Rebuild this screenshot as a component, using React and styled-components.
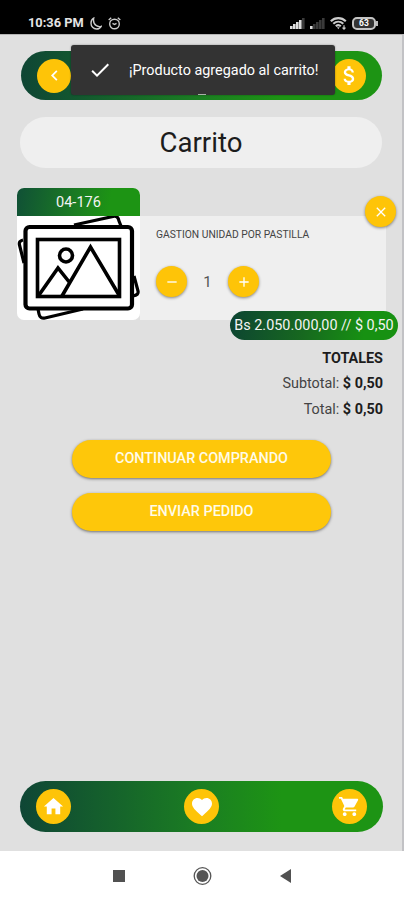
import React from 'react';
import styled, { createGlobalStyle } from 'styled-components';
import {
  MdAdd,
  MdCheck,
  MdChevronLeft,
  MdClose,
  MdFavorite,
  MdHome,
  MdRemove,
  MdShoppingCart,
  MdAttachMoney,
} from 'react-icons/md';

const GlobalStyle = createGlobalStyle`
  * {
    box-sizing: border-box;
  }
  body {
    margin: 0;
    font-family: Roboto, 'Liberation Sans', sans-serif;
    color: #1c1c1c;
    background: #e0e0e0;
  }
`;

const Screen = styled.div`
  display: flex;
  flex-direction: column;
  width: 404px;
  height: 900px;
  overflow: hidden;
  background: #e0e0e0;
`;

const StatusBar = styled.div`
  display: flex;
  align-items: center;
  flex: 0 0 34px;
  padding: 12px 26px 0 28px;
  background: #000;
  color: #e4e4e4;
`;

const Clock = styled.span`
  width: 62px;
  font-size: 12.8px;
  font-weight: 700;
  line-height: 22px;
  white-space: nowrap;
`;

const StatusIcons = styled.div`
  display: flex;
  align-items: center;
  gap: ${({ $gap }) => $gap}px;
  margin-left: ${({ $push }) => ($push ? 'auto' : '0')};
`;

const Content = styled.main`
  position: relative;
  display: flex;
  flex-direction: column;
  flex: 1;
  border-top: 1px solid #b4b4b4;
  border-right: 2px solid #c2c2c5;
  padding-top: 16px;
`;

const Bar = styled.div`
  display: flex;
  align-items: center;
  justify-content: space-between;
  width: ${({ $width }) => $width}px;
  height: ${({ $height }) => $height}px;
  margin-left: ${({ $left }) => $left}px;
  padding: 0 16px;
  border-radius: 26px;
  background: linear-gradient(90deg, #0f4635 0%, #1b7e22 50%, #1d9414 72%, #1d9414 100%);
`;

const Brand = styled.span`
  position: relative;
  z-index: 1;
  align-self: flex-end;
  width: 8px;
  height: 1px;
  margin-bottom: 5px;
  background: #a9b0a9;
`;

const RoundButton = styled.button`
  display: flex;
  align-items: center;
  justify-content: center;
  flex: none;
  width: ${({ $size }) => $size}px;
  height: ${({ $size }) => $size}px;
  padding: 0;
  border: 0;
  border-radius: 50%;
  background: #fec408;
  color: #fff;
  box-shadow: ${({ $raised }) => ($raised ? '0 1px 3px rgba(0, 0, 0, 0.45)' : 'none')};
`;

const Toast = styled.div`
  position: absolute;
  top: 10px;
  left: 71px;
  display: flex;
  align-items: center;
  width: 264px;
  height: 50px;
  padding-left: 17px;
  border-radius: 3px;
  background: #333;
  color: #fff;
  box-shadow: 0 0 2px rgba(0, 0, 0, 0.4);
`;

const ToastText = styled.span`
  margin: 0 0 0 17px;
  font-size: 14.4px;
  white-space: nowrap;
`;

const Title = styled.h1`
  width: 362px;
  height: 51px;
  margin: 17px 0 0 20px;
  border-radius: 26px;
  background: #efefef;
  font-size: 27.6px;
  font-weight: 400;
  line-height: 51px;
  text-align: center;
`;

const Item = styled.section`
  position: relative;
  display: flex;
  align-items: flex-end;
  height: 132px;
  margin: 20px 0 0 17px;
`;

const Thumb = styled.div`
  width: 123px;
  height: 132px;
  border-radius: 7px;
  background: #fff;
  overflow: hidden;
`;

const Code = styled.div`
  height: 28px;
  background: linear-gradient(100deg, #105036 0%, #1b7c22 48%, #1d9414 75%);
  color: #f4f4f4;
  font-size: 14.6px;
  line-height: 28px;
  text-align: center;
`;

const Details = styled.div`
  width: 246px;
  height: 104px;
  padding: 12px 0 0 16px;
  background: #efefef;
`;

const ProductName = styled.p`
  margin: 0;
  color: #444;
  font-size: 10.3px;
  line-height: 14px;
  white-space: nowrap;
`;

const Stepper = styled.div`
  display: flex;
  align-items: center;
  margin-top: 24px;
`;

const Quantity = styled.span`
  width: 41px;
  color: #555;
  font-size: 15px;
  text-align: center;
`;

const RemoveSlot = styled.div`
  position: absolute;
  top: 8px;
  left: 348px;
`;

const Price = styled.div`
  position: absolute;
  top: 123px;
  left: 213px;
  width: 168px;
  height: 29px;
  border-radius: 15px;
  background: linear-gradient(100deg, #0d4432 0%, #17691f 45%, #179112 80%);
  color: #f4f4f4;
  font-size: 14.4px;
  line-height: 30px;
  text-align: center;
  white-space: nowrap;
`;

const Totals = styled.div`
  display: flex;
  flex-direction: column;
  align-items: flex-end;
  margin: 26px 19px 0 0;
`;

const TotalLine = styled.div`
  color: #444;
  font-size: 14.4px;
  line-height: 25.3px;

  b {
    color: #1c1c1c;
    font-weight: 700;
  }
`;

const Actions = styled.div`
  display: flex;
  flex-direction: column;
  gap: 15px;
  width: 259px;
  margin: 18px 0 0 72px;
`;

const Action = styled.button`
  height: 38px;
  padding: 0 0 1px;
  border: 0;
  border-radius: 19px;
  background: #fec70a;
  color: #fffbe8;
  font-family: inherit;
  font-size: 14.4px;
  font-weight: 500;
  box-shadow: 0 1px 3px rgba(0, 0, 0, 0.5);
`;

const Footer = styled.footer`
  margin-top: auto;
  padding-bottom: 19px;
`;

const SystemNav = styled.nav`
  display: flex;
  align-items: center;
  flex: 0 0 49px;
  padding-left: 113px;
  background: #fff;
`;

const Moon = () => (
  <svg width="12" height="13" viewBox="0 0 12 13" fill="none" stroke="#ccc" strokeWidth="1.4">
    <path d="M3.7 1.2C2.3 2 1 4 1 6.3 1 9.5 3.4 12 6.5 12c2.1 0 3.8-1 4.7-2.7-1.3.4-3.2.4-4.8-.6C3.8 7.2 3.2 4 3.7 1.2Z" />
  </svg>
);

const Alarm = () => (
  <svg width="13" height="13" viewBox="0 0 13 13" fill="none" stroke="#ccc" strokeWidth="1.4">
    <circle cx="6.5" cy="7" r="4.8" />
    <path d="M.7 3 3.2.8M12.3 3 9.8.8M4.5 6.3l2 1.2 2-1.2" />
  </svg>
);

const Signal = ({ level }) => (
  <svg width="15" height="12" viewBox="0 0 15 12">
    {[3, 5, 7, 9, 11].map((height, i) => (
      <rect
        key={height}
        x={i * 3}
        y={12 - height}
        width="2.6"
        height={height}
        fill={i < level ? '#ddd' : '#3a3a3a'}
      />
    ))}
  </svg>
);

const Wifi = () => (
  <svg width="17" height="13" viewBox="0 0 17 13" fill="none" stroke="#ccc" strokeWidth="2.1">
    <path d="M.8 4.3c4.3-4.2 10.7-4.2 15 0M3.3 6.8c3-2.8 7-2.8 10 0M5.8 9.2c1.6-1.4 3.6-1.4 5 0" />
    <path d="m7 10.3 1.3 1.9 1.4-1.9Z" fill="#ccc" stroke="none" />
    <path d="M14 8.2v4M12.5 10.7l1.500 1.500 1.500-1.500" strokeWidth="1.2" />
  </svg>
);

const BatteryShell = styled.span`
  display: flex;
  align-items: center;

  &::after {
    content: '';
    width: 2px;
    height: 5px;
    background: #bbb;
  }
`;

const BatteryBody = styled.span`
  width: 24px;
  height: 13px;
  border: 2px solid #c4c4c4;
  border-radius: 5px;
  background: #333;
  color: #fff;
  font-size: 8.5px;
  font-weight: 700;
  line-height: 9px;
  text-align: center;
`;

const PicturePlaceholder = () => (
  <svg width="123" height="104" viewBox="0 0 123 104" fill="none" stroke="#000" strokeWidth="3.6">
    <g strokeLinejoin="round">
      <path
        d="M57 9 96 .5Q101-1 102 5L104 10M7 47 2.5 29Q1.5 25 6 24M117 60 121 75Q122 79 116 80M21 93 22 98Q23 103 28 102L66 93"
        strokeWidth="3.2"
      />
      <rect x="8.5" y="11" width="106.5" height="81.5" rx="4" fill="#fff" strokeWidth="4.2" />
    </g>
    <rect x="20.5" y="23.5" width="82" height="57" />
    <circle cx="49" cy="39.5" r="6.5" />
    <path d="M22 79 41 52 53 67M45 80 73.5 31 102 79" />
  </svg>
);

const NavIcons = () => (
  <svg width="180" height="22" viewBox="0 0 180 22">
    <rect y="5" width="12" height="12" fill="#515151" />
    <circle cx="89.5" cy="11" r="8.3" fill="none" stroke="#555" strokeWidth="1.3" />
    <circle cx="89.5" cy="11" r="6" fill="#555" />
    <path d="m167 11 11-7v14Z" fill="#515151" />
  </svg>
);

const App = () => (
  <Screen>
    <GlobalStyle />
    <StatusBar>
      <Clock>10:36 PM</Clock>
      <StatusIcons $gap={6}>
        <Moon />
        <Alarm />
      </StatusIcons>
      <StatusIcons $gap={5} $push>
        <Signal level={4} />
        <Signal level={1} />
        <Wifi />
        <BatteryShell>
          <BatteryBody>63</BatteryBody>
        </BatteryShell>
      </StatusIcons>
    </StatusBar>

    <Content>
      <Bar $width={361} $height={49} $left={21}>
        <RoundButton $size={34} aria-label="Volver">
          <MdChevronLeft size={21} />
        </RoundButton>
        <Brand />
        <RoundButton $size={34} aria-label="Moneda">
          <MdAttachMoney size={25} />
        </RoundButton>
      </Bar>
      <Toast role="status">
        <MdCheck size={24} />
        <ToastText>¡Producto agregado al carrito!</ToastText>
      </Toast>

      <Title>Carrito</Title>

      <Item>
        <Thumb>
          <Code>04-176</Code>
          <PicturePlaceholder />
        </Thumb>
        <Details>
          <ProductName>GASTION UNIDAD POR PASTILLA</ProductName>
          <Stepper>
            <RoundButton $size={31} $raised aria-label="Restar">
              <MdRemove size={16} />
            </RoundButton>
            <Quantity>1</Quantity>
            <RoundButton $size={31} $raised aria-label="Sumar">
              <MdAdd size={16} />
            </RoundButton>
          </Stepper>
        </Details>
        <RemoveSlot>
          <RoundButton $size={31} $raised aria-label="Eliminar">
            <MdClose size={16} />
          </RoundButton>
        </RemoveSlot>
        <Price>Bs 2.050.000,00 // $ 0,50</Price>
      </Item>

      <Totals>
        <TotalLine>
          <b>TOTALES</b>
        </TotalLine>
        <TotalLine>
          Subtotal: <b>$ 0,50</b>
        </TotalLine>
        <TotalLine>
          Total: <b>$ 0,50</b>
        </TotalLine>
      </Totals>

      <Actions>
        <Action>CONTINUAR COMPRANDO</Action>
        <Action>ENVIAR PEDIDO</Action>
      </Actions>

      <Footer>
        <Bar $width={363} $height={51} $left={20}>
          <RoundButton $size={35} aria-label="Inicio">
            <MdHome size={23} />
          </RoundButton>
          <RoundButton $size={35} aria-label="Favoritos">
            <MdFavorite size={24} />
          </RoundButton>
          <RoundButton $size={35} aria-label="Carrito">
            <MdShoppingCart size={23} />
          </RoundButton>
        </Bar>
      </Footer>
    </Content>

    <SystemNav>
      <NavIcons />
    </SystemNav>
  </Screen>
);

export default App;
